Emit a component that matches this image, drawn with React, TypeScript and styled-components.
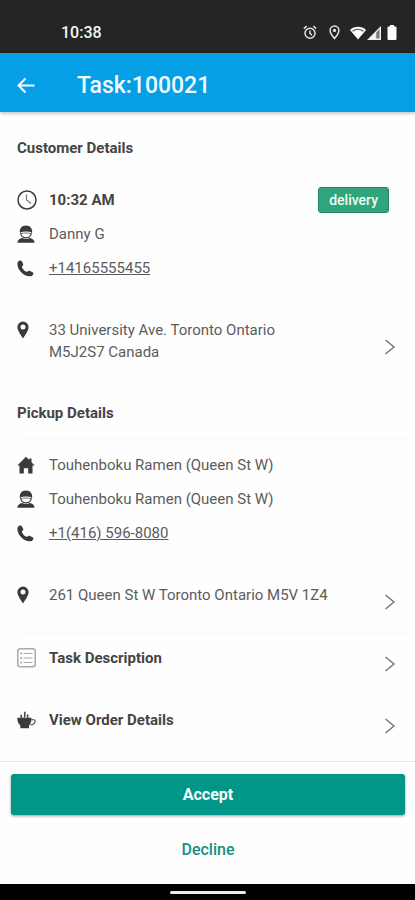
import React from "react";
import styled, { createGlobalStyle } from "styled-components";

const GlobalStyle = createGlobalStyle`
  * { box-sizing: border-box; }
  body {
    margin: 0;
    background: #fefefe;
    color: #424242;
    font-family: Roboto, "Liberation Sans", sans-serif;
    font-size: 15px;
    line-height: 22px;
  }
`;

const Screen = styled.div`
  display: flex;
  flex-direction: column;
  min-height: 100vh;
`;

const StatusBar = styled.div`
  display: flex;
  align-items: center;
  justify-content: space-between;
  height: 53px;
  padding: 12px 18px 0 61px;
  background: #252525;
  color: #f4f4f4;
  font-size: 16px;
  font-weight: 500;
`;

const StatusIcons = styled.div`
  display: flex;
  align-items: center;
  svg { display: block; }
`;

const StatusGap = styled.span<{ $size: number }>`
  width: ${(p) => p.$size}px;
`;

const AppBar = styled.header`
  display: flex;
  align-items: center;
  gap: 41px;
  height: 59px;
  padding: 6px 16px 0;
  background: #049fe4;
  color: #f2fbff;
  box-shadow: 0 1px 4px rgba(0, 0, 0, 0.3);
  z-index: 1;
`;

const BackButton = styled.button`
  display: flex;
  padding: 0;
  border: 0;
  background: none;
  color: inherit;
  cursor: pointer;
`;

const Title = styled.h1`
  margin: 0;
  font-size: 23px;
  line-height: 28px;
  font-weight: 500;
`;

const Content = styled.main`
  flex: 1;
  padding: 10px 0 4px 17px;
`;

const SectionTitle = styled.h2`
  margin: 0;
  padding: 15px 0;
  border-bottom: 1px solid #f9f9f9;
  font-size: 15px;
  line-height: 22px;
  font-weight: 700;
  color: #444;
`;

const Details = styled.div`
  padding: 8px 0 21px;
`;

const DetailRow = styled.div`
  display: flex;
  align-items: center;
  height: 34px;
  padding-right: 26px;
`;

const IconCell = styled.span`
  display: flex;
  align-items: center;
  flex: none;
  width: 32px;
  height: 22px;
  color: #3a3a3a;
`;

const Label = styled.span<{ $strong?: boolean }>`
  flex: 1;
  font-weight: ${(p) => (p.$strong ? 700 : 400)};
  color: ${(p) => (p.$strong ? "#444" : "#5c5c5c")};
`;

const PhoneLink = styled.a`
  color: #5c5c5c;
  text-decoration: underline;
`;

const Tag = styled.span`
  padding: 2px 10px;
  border: 1px solid #23875f;
  border-radius: 3px;
  background: #30a57c;
  color: #eefcf5;
  font-size: 14px;
  line-height: 20px;
  font-weight: 500;
`;

const NavItem = styled.button`
  display: flex;
  align-items: flex-start;
  width: 100%;
  min-height: 62px;
  padding: 14px 19px 14px 0;
  border: 0;
  border-top: 1px solid #f9f9f9;
  background: none;
  font: inherit;
  text-align: left;
  cursor: pointer;
`;

const NavText = styled(Label)`
  max-width: 290px;
`;

const ChevronCell = styled.span`
  display: flex;
  align-self: center;
  margin-left: auto;
`;

const AddressItem = styled(NavItem)<{ $tall?: boolean }>`
  min-height: ${(p) => (p.$tall ? 81 : 61)}px;
  padding-top: 12px;
  padding-bottom: 12px;
`;

const AddressText = styled(Label)<{ $narrow?: boolean }>`
  max-width: ${(p) => (p.$narrow ? 250 : 300)}px;
`;

const Actions = styled.footer`
  display: flex;
  flex-direction: column;
  gap: 14px;
  padding: 12px 10px 14px 11px;
  border-top: 1px solid #e6e6e6;
`;

const ActionButton = styled.button<{ $primary?: boolean }>`
  height: 41px;
  border: 0;
  border-radius: 3px;
  background: ${(p) => (p.$primary ? "#029688" : "transparent")};
  box-shadow: ${(p) => (p.$primary ? "0 1px 3px rgba(0, 0, 0, 0.4)" : "none")};
  color: ${(p) => (p.$primary ? "#f4fffd" : "#129080")};
  font-family: inherit;
  font-size: 16px;
  font-weight: ${(p) => (p.$primary ? 700 : 500)};
  cursor: pointer;
`;

const GestureBar = styled.div`
  display: flex;
  align-items: center;
  justify-content: center;
  height: 16px;
  background: #000;
`;

const GestureHandle = styled.span`
  width: 76px;
  height: 3px;
  border-radius: 2px;
  background: #ececec;
`;

const AlarmIcon = () => (
  <svg width="14" height="15" viewBox="0 0 14 15" fill="none" stroke="#e4e4e4" strokeWidth="1.5">
    <circle cx="7" cy="8.3" r="5" />
    <path d="M7 5.4v3.1l2 1.6M.8 3.6 3.7 1.2M13.2 3.6l-2.9-2.4" />
  </svg>
);

const StatusPinIcon = () => (
  <svg width="11" height="15" viewBox="0 0 11 15">
    <path d="M5.5 13.6C3.6 11 1.1 8.3 1.1 5.4a4.4 4.4 0 0 1 8.8 0c0 2.9-2.5 5.6-4.4 8.2z" fill="none" stroke="#e4e4e4" strokeWidth="1.5" />
    <circle cx="5.5" cy="5.4" r="1.6" fill="#e4e4e4" />
  </svg>
);

const WifiIcon = () => (
  <svg width="16" height="14" viewBox="0 0 16 14">
    <path d="M0 4C4.5-.3 11.5-.3 16 4L8 13.600z" fill="#fff" />
    <path d="M2.600 5.200c3.200-2.500 7.600-2.500 10.800 0" fill="none" stroke="#555" strokeWidth="1.3" />
  </svg>
);

const SignalIcon = () => (
  <svg width="14" height="14" viewBox="0 0 14 14">
    <path d="M0 14 14 0v14z" fill="#f0f0f0" />
    <path d="M9.3 6.5 12.5 3.3v9.3H9.3z" fill="#777" />
  </svg>
);

const BatteryIcon = () => (
  <svg width="10" height="15" viewBox="0 0 10 15">
    <path d="M3 0h4v1.600h1.500q1 0 1 1V14q0 1-1 1h-7q-1 0-1-1V2.600q0-1 1-1H3z" fill="#fff" />
  </svg>
);

const BackIcon = () => (
  <svg width="20" height="20" viewBox="0 0 20 20" fill="none" stroke="currentColor" strokeWidth="2">
    <path d="M18.500 9.500H2.500M9.500 2.500l-7 7 7 7" />
  </svg>
);

const ClockIcon = () => (
  <svg width="20" height="20" viewBox="0 0 20 20" fill="none" stroke="currentColor">
    <circle cx="10" cy="10" r="9" strokeWidth="1.5" />
    <path d="M9.5 4.500V10l4.500 3.500" strokeWidth="1.2" stroke="#777" />
  </svg>
);

const PersonIcon = () => (
  <svg width="18" height="18" viewBox="0 0 18 18">
    <path d="M2.800 7.600C2.500 3.300 4.800.5 9 .5s6.500 2.800 6.200 7.100C11.500 6.200 6.500 6.200 2.800 7.600z" fill="currentColor" />
    <path d="M3.500 7.500c.5 3.700 2.500 5.400 5.500 5.400s5-1.700 5.500-5.400" fill="none" stroke="currentColor" strokeWidth="1.200" />
    <path d="M4 8.700c3-1 7-1 10 0" fill="none" stroke="#777" strokeWidth="1" />
    <path d="M.4 17.800c.3-3.100 2.200-4.200 4.800-4.800 2.200 1.400 5.400 1.400 7.600 0 2.600.6 4.500 1.700 4.800 4.800z" fill="currentColor" />
  </svg>
);

const PhoneIcon = () => (
  <svg width="17" height="17" viewBox="0 0 17 17" fill="currentColor">
    <path d="M2.200.8C3.600 0 4.400.5 5 1.600l1 2c.6 1.200.2 1.800-.6 2.300-.6.400-.6.800-.3 1.500.9 1.900 2.200 3.300 4 4.200.7.400 1.100.3 1.500-.2.600-.8 1.300-1 2.300-.5l2.300 1.100c1.200.6 1.500 1.400.9 2.400-.7 1.400-1.800 2-3.400 1.900C6.400 16.100.5 10 .4 4 .4 2.500 1 1.500 2.200.8z" />
  </svg>
);

const PinIcon = () => (
  <svg width="12" height="18" viewBox="0 0 12 18">
    <path fillRule="evenodd" d="M6 .5a5.600 5.600 0 0 0-5.600 5.600C.4 9.500 3.500 13.500 6 17.500c2.500-4 5.600-8 5.600-11.400A5.600 5.600 0 0 0 6 .5zm0 3a2.500 2.500 0 1 1 0 5 2.500 2.500 0 0 1 0-5z" fill="currentColor" />
  </svg>
);

const HomeIcon = () => (
  <svg width="18" height="18" viewBox="0 0 18 18" fill="currentColor">
    <path d="M9 .8 12.300 4V2.600h2.200v3.700l3.200 3.300h-2.200V17.500h-4.300v-5.300H6.800v5.300H2.500V9.600H.3z" />
  </svg>
);

const ListIcon = () => (
  <svg width="20" height="20" viewBox="0 0 20 20" fill="none" stroke="#aaa">
    <rect x="0.75" y="0.75" width="17.5" height="18" rx="2.5" strokeWidth="1.5" />
    <path d="M6.500 5.500H15.500M6.500 10H15.500M6.500 14.500H15.500" strokeWidth="1.200" />
    <path d="M3.300 5.500h1.700M3.300 10h1.700M3.300 14.500h1.700" stroke="#999" strokeWidth="1.3" />
  </svg>
);

const CupIcon = () => (
  <svg width="19" height="18" viewBox="0 0 19 18">
    <path d="M.3 6.800h14.200c0 3.800-.8 6-2.500 7.800v2.600H3.300v-2.600C1.500 12.800.3 10.600.3 6.800z" fill="currentColor" />
    <path d="M14.200 8.600h2q2 0 1.800 2-.4 3-4.800 3.200" fill="none" stroke="#666" strokeWidth="1.300" />
    <path d="M8.500.8C5.800 2.500 9.800 3.800 7 6.500M11 3.600c-1.300 1.200.4 1.700-.6 3.200M4.500 3.800c-.9.900.2 1.500-.4 3" fill="none" stroke="currentColor" strokeWidth="1.500" />
  </svg>
);

const ChevronIcon = () => (
  <svg width="12" height="16" viewBox="0 0 12 16" fill="none" stroke="#777" strokeWidth="1.5">
    <path d="M1.500 1 10 8l-8.500 7" />
  </svg>
);

export default function App() {
  return (
    <>
      <GlobalStyle />
      <Screen>
        <StatusBar>
          <span>10:38</span>
          <StatusIcons>
            <AlarmIcon />
            <StatusGap $size={12} />
            <StatusPinIcon />
            <StatusGap $size={10} />
            <WifiIcon />
            <StatusGap $size={1} />
            <SignalIcon />
            <StatusGap $size={6} />
            <BatteryIcon />
          </StatusIcons>
        </StatusBar>
        <AppBar>
          <BackButton type="button" aria-label="Back"><BackIcon /></BackButton>
          <Title>Task:100021</Title>
        </AppBar>
        <Content>
          <SectionTitle>Customer Details</SectionTitle>
          <Details>
            <DetailRow>
              <IconCell><ClockIcon /></IconCell>
              <Label $strong>10:32 AM</Label>
              <Tag>delivery</Tag>
            </DetailRow>
            <DetailRow>
              <IconCell><PersonIcon /></IconCell>
              <Label>Danny G</Label>
            </DetailRow>
            <DetailRow>
              <IconCell><PhoneIcon /></IconCell>
              <PhoneLink href="tel:+14165555455">+14165555455</PhoneLink>
            </DetailRow>
          </Details>
          <AddressItem type="button" $tall>
            <IconCell><PinIcon /></IconCell>
            <AddressText $narrow>33 University Ave. Toronto Ontario M5J2S7 Canada</AddressText>
            <ChevronCell><ChevronIcon /></ChevronCell>
          </AddressItem>
          <SectionTitle>Pickup Details</SectionTitle>
          <Details>
            <DetailRow>
              <IconCell><HomeIcon /></IconCell>
              <Label>Touhenboku Ramen (Queen St W)</Label>
            </DetailRow>
            <DetailRow>
              <IconCell><PersonIcon /></IconCell>
              <Label>Touhenboku Ramen (Queen St W)</Label>
            </DetailRow>
            <DetailRow>
              <IconCell><PhoneIcon /></IconCell>
              <PhoneLink href="tel:+14165968080">+1(416) 596-8080</PhoneLink>
            </DetailRow>
          </Details>
          <AddressItem type="button">
            <IconCell><PinIcon /></IconCell>
            <AddressText>261 Queen St W Toronto Ontario M5V 1Z4</AddressText>
            <ChevronCell><ChevronIcon /></ChevronCell>
          </AddressItem>
          <NavItem type="button">
            <IconCell><ListIcon /></IconCell>
            <NavText $strong>Task Description</NavText>
            <ChevronCell><ChevronIcon /></ChevronCell>
          </NavItem>
          <NavItem type="button">
            <IconCell><CupIcon /></IconCell>
            <NavText $strong>View Order Details</NavText>
            <ChevronCell><ChevronIcon /></ChevronCell>
          </NavItem>
        </Content>
        <Actions>
          <ActionButton type="button" $primary>Accept</ActionButton>
          <ActionButton type="button">Decline</ActionButton>
        </Actions>
        <GestureBar><GestureHandle /></GestureBar>
      </Screen>
    </>
  );
}
